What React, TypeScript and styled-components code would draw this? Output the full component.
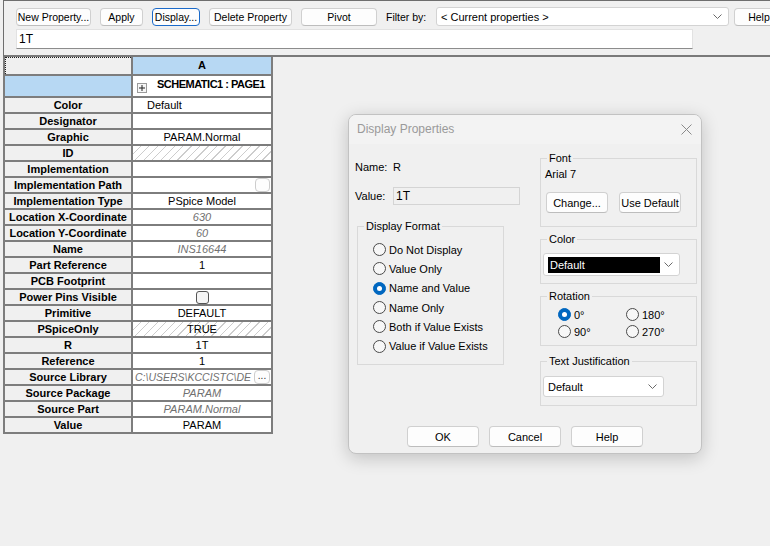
import React from 'react';
import styled, { createGlobalStyle } from 'styled-components';

const GlobalStyle = createGlobalStyle`
  html, body { margin: 0; padding: 0; background: #f0f0f0; }
  body { font-family: "Liberation Sans", Arial, sans-serif; font-size: 11px; color: #000; }
  * { box-sizing: border-box; }
`;

const Page = styled.div`
  position: relative;
  width: 770px;
  height: 546px;
  overflow: hidden;
  background: #f0f0f0;
`;

/* ---------- toolbar ---------- */
const Toolbar = styled.div`
  margin-left: 3px;
  border-top: 1px solid #6e6e6e;
  border-left: 1px solid #6e6e6e;
  border-bottom: 2px solid #7a7a7a;
  padding: 6px 0 6px 12px;
  display: flex;
  flex-direction: column;
  gap: 3px;
`;

const ButtonRow = styled.div`
  display: flex;
  align-items: center;
  gap: 9px;
  height: 19px;
  white-space: nowrap;
`;

const ToolButton = styled.button<{ $w: number; $focused?: boolean }>`
  width: ${p => p.$w}px;
  height: 18px;
  flex: none;
  padding: 0;
  margin: 0;
  background: #fdfdfd;
  border: 1px solid ${p => (p.$focused ? '#1b6ac9' : '#d0d0d0')};
  border-bottom-color: ${p => (p.$focused ? '#1b6ac9' : '#bdbdbd')};
  border-radius: 4px;
  font-family: "Liberation Sans", Arial, sans-serif;
  font-size: 10.5px;
  color: #000;
  line-height: 16px;
  text-align: center;
  overflow: hidden;
`;

const FilterLabel = styled.span`
  width: 41px;
  flex: none;
  font-size: 10.5px;
`;

const FilterGroup = styled.div`
  display: flex;
  align-items: center;
  gap: 5px;
`;

const ComboBox = styled.div<{ $w: number; $h: number }>`
  width: ${p => p.$w}px;
  height: ${p => p.$h}px;
  flex: none;
  background: #fff;
  border: 1px solid #d3d3d3;
  border-radius: 3px;
  display: flex;
  align-items: center;
  justify-content: space-between;
  padding: 0 6px 0 4px;
  font-size: 11px;
  color: #000;
`;

const ValueInput = styled.div`
  width: 677px;
  height: 20px;
  background: #fff;
  border: 1px solid #e2e2e2;
  border-bottom: 1px solid #8c8c8c;
  padding-left: 2px;
  font-size: 12px;
  line-height: 18px;
`;

/* ---------- property sheet ---------- */
const Sheet = styled.div`
  margin-left: 3px;
  width: 270px;
  display: grid;
  grid-template-columns: 126px 138px;
  gap: 2px;
  padding: 0 2px 2px 2px;
  background: #7d7d7d;
`;

const LabelCell = styled.div<{ $h?: number; $tone?: 'plain' | 'blue' | 'focus' }>`
  height: ${p => p.$h ?? 14}px;
  background: ${p => (p.$tone === 'blue' ? '#b7d8f3' : '#f0f0f0')};
  border-top: ${p => (p.$tone === 'focus' ? '1px dotted #222' : 'none')};
  border-left: ${p => (p.$tone === 'focus' ? '1px dotted #222' : 'none')};
  font-weight: bold;
  font-size: 11px;
  line-height: 14px;
  text-align: center;
  white-space: nowrap;
  overflow: hidden;
`;

const ColumnHead = styled.div`
  height: 17px;
  background: #b7d8f3;
  font-weight: bold;
  font-size: 11px;
  line-height: 17px;
  text-align: center;
`;

const GroupCell = styled.div`
  height: 20px;
  background: #fff;
  display: flex;
  align-items: flex-start;
  padding-left: 4px;
  overflow: hidden;
  white-space: nowrap;
`;

const Expander = styled.span`
  width: 10px;
  height: 10px;
  margin-top: 7px;
  flex: none;
  border: 1px solid #9a9a9a;
  background: #f6f6f6;
  display: flex;
  align-items: center;
  justify-content: center;
`;

const GroupTitle = styled.span`
  margin-left: 10px;
  margin-top: 2px;
  font-weight: bold;
  font-size: 11px;
  letter-spacing: -0.5px;
`;

const ValueCell = styled.div<{ $align?: 'left' | 'center'; $muted?: boolean; $hatched?: boolean; $pad?: number }>`
  height: 14px;
  background: ${p =>
    p.$hatched
      ? 'repeating-linear-gradient(135deg, #ffffff 0px, #ffffff 5px, #cdcdcd 5px, #cdcdcd 6px)'
      : '#fff'};
  display: flex;
  align-items: center;
  justify-content: ${p => (p.$align === 'left' ? 'flex-start' : 'center')};
  padding-left: ${p => p.$pad ?? 0}px;
  font-size: 11px;
  line-height: 14px;
  font-style: ${p => (p.$muted ? 'italic' : 'normal')};
  color: ${p => (p.$muted ? '#707070' : '#000')};
  white-space: nowrap;
  overflow: hidden;
`;

const ClippedText = styled.span`
  flex: 1;
  min-width: 0;
  overflow: hidden;
  white-space: nowrap;
  font-size: 10.5px;
`;

const MiniBox = styled.span<{ $w: number }>`
  width: ${p => p.$w}px;
  height: 14px;
  margin-left: auto;
  margin-right: 1px;
  flex: none;
  border: 1px solid #cdcdcd;
  border-radius: 4px;
  background: #fdfdfd;
  font-style: normal;
  color: #333;
  font-size: 10px;
  line-height: 10px;
  text-align: center;
`;

const CheckBox = styled.span`
  width: 13px;
  height: 13px;
  border: 1px solid #555;
  border-radius: 3px;
  background: #f5f5f5;
`;

/* ---------- dialog ---------- */
const Dialog = styled.div`
  position: absolute;
  left: 348px;
  top: 114px;
  width: 354px;
  height: 340px;
  background: #f0f0f0;
  border: 1px solid #c2c2c2;
  border-radius: 8px;
  box-shadow: 0 4px 18px rgba(0, 0, 0, 0.2);
  display: flex;
  flex-direction: column;
  overflow: hidden;
`;

const TitleBar = styled.div`
  height: 29px;
  flex: none;
  display: flex;
  align-items: center;
  justify-content: space-between;
  padding: 0 9px 1px 8px;
  background: #f3f3f3;
  color: #9a9a9a;
  font-size: 12px;
`;

const DialogBody = styled.div`
  display: grid;
  grid-template-columns: 166px 157px;
  column-gap: 19px;
  padding: 1px 4px 0 6px;
`;

const LeftColumn = styled.div`
  padding-top: 15px;
  display: flex;
  flex-direction: column;
`;

const RightColumn = styled.div`
  padding-top: 7px;
  display: flex;
  flex-direction: column;
`;

const FieldRow = styled.div<{ $mt?: number; $h: number }>`
  display: flex;
  align-items: center;
  height: ${p => p.$h}px;
  margin-top: ${p => p.$mt ?? 0}px;
`;

const FieldLabel = styled.span`
  width: 38px;
  flex: none;
`;

const ReadOnlyBox = styled.div`
  width: 127px;
  height: 18px;
  border: 1px solid #d4d4d4;
  background: #f0f0f0;
  padding-left: 2px;
  font-size: 12px;
  line-height: 16px;
`;

const Group = styled.fieldset<{ $h: number; $w?: number; $mt?: number; $ml?: number }>`
  margin: ${p => p.$mt ?? 0}px 0 0 ${p => p.$ml ?? 0}px;
  padding: 0;
  width: ${p => (p.$w ? `${p.$w}px` : 'auto')};
  height: ${p => p.$h}px;
  border: 1px solid #d9d9d9;
  min-width: 0;
`;

const Legend = styled.legend`
  margin-left: 6px;
  padding: 0 2px;
  font-size: 11px;
  line-height: 13px;
`;

const GroupContent = styled.div<{ $pt: number; $pl: number }>`
  padding: ${p => p.$pt}px 0 0 ${p => p.$pl}px;
`;

const RadioList = styled.div`
  display: flex;
  flex-direction: column;
`;

const RadioGrid = styled.div`
  display: grid;
  grid-template-columns: 68px 68px;
`;

const RadioItem = styled.label<{ $h: number }>`
  display: flex;
  align-items: center;
  height: ${p => p.$h}px;
  white-space: nowrap;
`;

const RadioCircle = styled.span<{ $checked?: boolean }>`
  width: 13px;
  height: 13px;
  flex: none;
  margin-right: 3px;
  border-radius: 50%;
  border: 1px solid ${p => (p.$checked ? '#0067c0' : '#4a4a4a')};
  background: ${p => (p.$checked ? '#0067c0' : '#f7f7f7')};
  display: flex;
  align-items: center;
  justify-content: center;
  &::after {
    content: '';
    display: ${p => (p.$checked ? 'block' : 'none')};
    width: 5px;
    height: 5px;
    border-radius: 50%;
    background: #fff;
  }
`;

const FontName = styled.div`
  height: 14px;
  line-height: 14px;
`;

const FontButtons = styled.div`
  display: flex;
  gap: 11px;
  margin-top: 11px;
  padding-left: 1px;
`;

const DlgButton = styled.button<{ $w: number; $h: number }>`
  width: ${p => p.$w}px;
  height: ${p => p.$h}px;
  padding: 0;
  margin: 0;
  background: #fdfdfd;
  border: 1px solid #d0d0d0;
  border-bottom-color: #bdbdbd;
  border-radius: 4px;
  font-family: "Liberation Sans", Arial, sans-serif;
  font-size: 11px;
  color: #000;
  text-align: center;
`;

const ColorSwatch = styled.span`
  width: 112px;
  height: 16px;
  background: #000;
  color: #fff;
  padding-left: 2px;
  line-height: 16px;
  font-size: 11px;
`;

const Footer = styled.div`
  margin-top: 20px;
  display: flex;
  justify-content: center;
  gap: 10px;
`;

const Chevron = () => (
  <svg width="9" height="6" viewBox="0 0 9 6">
    <polyline points="0.5,0.5 4.5,4.5 8.5,0.5" fill="none" stroke="#6a6a6a" strokeWidth="1" />
  </svg>
);

const CloseIcon = () => (
  <svg width="11" height="11" viewBox="0 0 11 11">
    <line x1="0.5" y1="0.5" x2="10.5" y2="10.5" stroke="#8a8a8a" strokeWidth="1" />
    <line x1="10.5" y1="0.5" x2="0.5" y2="10.5" stroke="#8a8a8a" strokeWidth="1" />
  </svg>
);

const PlusIcon = () => (
  <svg width="8" height="8" viewBox="0 0 8 8">
    <line x1="1" y1="4" x2="7" y2="4" stroke="#222" strokeWidth="1" />
    <line x1="4" y1="1" x2="4" y2="7" stroke="#222" strokeWidth="1" />
  </svg>
);

type Row = {
  label: string;
  value?: string;
  align?: 'left' | 'center';
  muted?: boolean;
  hatched?: boolean;
  kind?: 'box' | 'check' | 'browse';
  pad?: number;
};

const rows: Row[] = [
  { label: 'Color', value: 'Default', align: 'left', pad: 14 },
  { label: 'Designator' },
  { label: 'Graphic', value: 'PARAM.Normal' },
  { label: 'ID', hatched: true },
  { label: 'Implementation' },
  { label: 'Implementation Path', kind: 'box' },
  { label: 'Implementation Type', value: 'PSpice Model' },
  { label: 'Location X-Coordinate', value: '630', muted: true },
  { label: 'Location Y-Coordinate', value: '60', muted: true },
  { label: 'Name', value: 'INS16644', muted: true },
  { label: 'Part Reference', value: '1' },
  { label: 'PCB Footprint' },
  { label: 'Power Pins Visible', kind: 'check' },
  { label: 'Primitive', value: 'DEFAULT' },
  { label: 'PSpiceOnly', value: 'TRUE', hatched: true },
  { label: 'R', value: '1T' },
  { label: 'Reference', value: '1' },
  { label: 'Source Library', value: 'C:\\USERS\\KCCISTC\\DE', muted: true, kind: 'browse', align: 'left', pad: 2 },
  { label: 'Source Package', value: 'PARAM', muted: true },
  { label: 'Source Part', value: 'PARAM.Normal', muted: true },
  { label: 'Value', value: 'PARAM' },
];

const formats = ['Do Not Display', 'Value Only', 'Name and Value', 'Name Only', 'Both if Value Exists', 'Value if Value Exists'];
const rotations = ['0°', '180°', '90°', '270°'];

const renderValue = (r: Row) => {
  if (r.kind === 'box') {
    return (
      <ValueCell $align="left">
        <MiniBox $w={15} />
      </ValueCell>
    );
  }
  if (r.kind === 'check') {
    return (
      <ValueCell>
        <CheckBox />
      </ValueCell>
    );
  }
  if (r.kind === 'browse') {
    return (
      <ValueCell $align="left" $muted $pad={r.pad}>
        <ClippedText>{r.value}</ClippedText>
        <MiniBox $w={16}>...</MiniBox>
      </ValueCell>
    );
  }
  return (
    <ValueCell $align={r.align} $muted={r.muted} $hatched={r.hatched} $pad={r.pad}>
      {r.value}
    </ValueCell>
  );
};

export default function App() {
  return (
    <Page>
      <GlobalStyle />
      <Toolbar>
        <ButtonRow>
          <ToolButton $w={75}>New Property...</ToolButton>
          <ToolButton $w={43}>Apply</ToolButton>
          <ToolButton $w={48} $focused>Display...</ToolButton>
          <ToolButton $w={83}>Delete Property</ToolButton>
          <ToolButton $w={76}>Pivot</ToolButton>
          <FilterLabel>Filter by:</FilterLabel>
          <FilterGroup>
            <ComboBox $w={293} $h={19}>
              <span>&lt; Current properties &gt;</span>
              <Chevron />
            </ComboBox>
            <ToolButton $w={50}>Help</ToolButton>
          </FilterGroup>
        </ButtonRow>
        <ValueInput>1T</ValueInput>
      </Toolbar>

      <Sheet>
        <LabelCell $h={17} $tone="focus" />
        <ColumnHead>A</ColumnHead>
        <LabelCell $h={20} $tone="blue" />
        <GroupCell>
          <Expander>
            <PlusIcon />
          </Expander>
          <GroupTitle>SCHEMATIC1 : PAGE1</GroupTitle>
        </GroupCell>
        {rows.map(r => (
          <React.Fragment key={r.label}>
            <LabelCell>{r.label}</LabelCell>
            {renderValue(r)}
          </React.Fragment>
        ))}
      </Sheet>

      <Dialog>
        <TitleBar>
          <span>Display Properties</span>
          <CloseIcon />
        </TitleBar>
        <DialogBody>
          <LeftColumn>
            <FieldRow $h={14}>
              <FieldLabel>Name:</FieldLabel>
              <span>R</span>
            </FieldRow>
            <FieldRow $h={18} $mt={13}>
              <FieldLabel>Value:</FieldLabel>
              <ReadOnlyBox>1T</ReadOnlyBox>
            </FieldRow>
            <Group $h={145} $w={147} $mt={15} $ml={2}>
              <Legend>Display Format</Legend>
              <GroupContent $pt={7} $pl={15}>
                <RadioList>
                  {formats.map(f => (
                    <RadioItem key={f} $h={19.3}>
                      <RadioCircle $checked={f === 'Name and Value'} />
                      {f}
                    </RadioItem>
                  ))}
                </RadioList>
              </GroupContent>
            </Group>
          </LeftColumn>

          <RightColumn>
            <Group $h={75}>
              <Legend>Font</Legend>
              <GroupContent $pt={2} $pl={4}>
                <FontName>Arial 7</FontName>
                <FontButtons>
                  <DlgButton $w={62} $h={21}>Change...</DlgButton>
                  <DlgButton $w={62} $h={21}>Use Default</DlgButton>
                </FontButtons>
              </GroupContent>
            </Group>
            <Group $h={51} $mt={6}>
              <Legend>Color</Legend>
              <GroupContent $pt={7} $pl={2}>
                <ComboBox $w={137} $h={23}>
                  <ColorSwatch>Default</ColorSwatch>
                  <Chevron />
                </ComboBox>
              </GroupContent>
            </Group>
            <Group $h={56} $mt={6}>
              <Legend>Rotation</Legend>
              <GroupContent $pt={3} $pl={17}>
                <RadioGrid>
                  {rotations.map(r => (
                    <RadioItem key={r} $h={17}>
                      <RadioCircle $checked={r === '0°'} />
                      {r}
                    </RadioItem>
                  ))}
                </RadioGrid>
              </GroupContent>
            </Group>
            <Group $h={51} $mt={9}>
              <Legend>Text Justification</Legend>
              <GroupContent $pt={8} $pl={2}>
                <ComboBox $w={121} $h={21}>
                  <span>Default</span>
                  <Chevron />
                </ComboBox>
              </GroupContent>
            </Group>
          </RightColumn>
        </DialogBody>
        <Footer>
          <DlgButton $w={72} $h={21}>OK</DlgButton>
          <DlgButton $w={72} $h={21}>Cancel</DlgButton>
          <DlgButton $w={72} $h={21}>Help</DlgButton>
        </Footer>
      </Dialog>
    </Page>
  );
}
